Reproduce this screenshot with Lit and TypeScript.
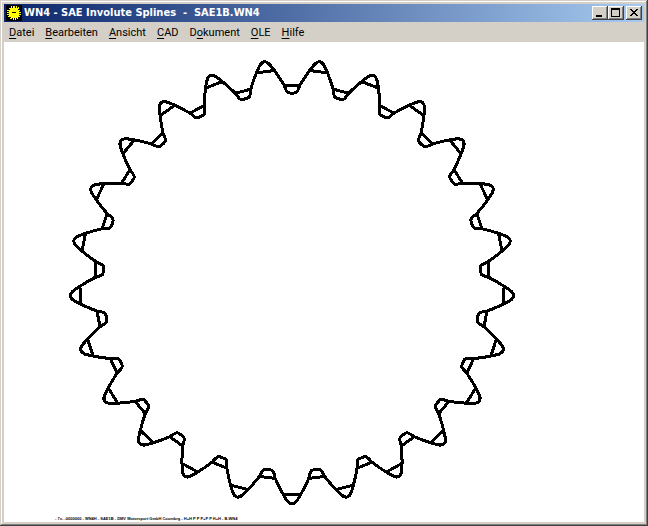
import { LitElement, html, css, svg } from "lit";
import { customElement } from "lit/decorators.js";

const TEETH = 25;
const CX = 288;
const CY = 240;
const STEP = (2 * Math.PI) / TEETH;

/** Profile point: offset across the tooth axis and distance along it. */
function place(angle: number, t: number, r: number): string {
  const x = CX + r * Math.cos(angle) - t * Math.sin(angle);
  const y = CY + r * Math.sin(angle) + t * Math.cos(angle);
  return `${x.toFixed(1)} ${y.toFixed(1)}`;
}

const angles = Array.from({ length: TEETH }, (_, i) => Math.PI / 2 + i * STEP);

/** Tooth tips, flanks and rounded roots as one closed curve. */
function profilePath(): string {
  const d = [`M${place(angles[0], -9, 212)}`];
  for (const a of angles) {
    const p = (t: number, r: number) => place(a, t, r);
    const q = (t: number, r: number) => place(a + STEP / 2, t, r);
    const n = (t: number, r: number) => place(a + STEP, t, r);
    d.push(
      `C${p(-6, 217)} ${p(-4, 222)} ${p(0, 222)}`,
      `C${p(4, 222)} ${p(6, 217)} ${p(9, 212)}`,
      `Q${p(13, 205)} ${q(-8, 197)}`,
      `L${q(-6, 192)} Q${q(-5, 189)} ${q(-2, 189)} L${q(2, 189)}`,
      `Q${q(5, 189)} ${q(6, 192)} L${q(8, 197)}`,
      `Q${n(-13, 205)} ${n(-9, 212)}`
    );
  }
  return d.join(" ") + "Z";
}

/** Short lines where the flanks meet the tip and root rounding. */
function chordPath(): string {
  return angles
    .map((a) => {
      const g = a + STEP / 2;
      return `M${place(a, -9, 212)}L${place(a, 9, 212)}M${place(g, -8, 197)}L${place(g, 8, 197)}`;
    })
    .join("");
}

const MENU: [string, string, string][] = [
  ["", "D", "atei"],
  ["", "B", "earbeiten"],
  ["", "A", "nsicht"],
  ["", "C", "AD"],
  ["D", "o", "kument"],
  ["", "O", "LE"],
  ["", "H", "ilfe"],
];

@customElement("app-root")
export class AppRoot extends LitElement {
  static styles = css`
    :host {
      display: flex;
      flex-direction: column;
      box-sizing: border-box;
      height: 100vh;
      padding: 4px;
      background: #d4d0c8;
      box-shadow: inset -1px -1px #404040, inset 1px 1px #d4d0c8,
        inset -2px -2px #808080, inset 2px 2px #fff;
      color: #000;
    }
    .title {
      display: flex;
      align-items: center;
      height: 18px;
      flex: none;
      padding: 0 2px;
      gap: 2px;
      background: linear-gradient(90deg, #0a246a, #a6caf0);
      color: #fff;
    }
    .logo {
      width: 16px;
      height: 16px;
      flex: none;
    }
    h1 {
      flex: 1;
      margin: 0;
      font: bold 11px/16px "DejaVu Sans Condensed", "DejaVu Sans", sans-serif;
      white-space: pre;
      overflow: hidden;
    }
    .controls {
      display: flex;
    }
    .control {
      width: 16px;
      height: 14px;
      padding: 0;
      border: 0;
      background: #d4d0c8;
      box-shadow: inset -1px -1px #404040, inset 1px 1px #fff,
        inset -2px -2px #808080;
    }
    .control svg {
      display: block;
      width: 16px;
      height: 14px;
    }
    .close {
      margin-left: 2px;
    }
    .menu {
      display: flex;
      flex: none;
      height: 20px;
    }
    .item {
      padding: 2px 6px 0 5px;
      border: 0;
      background: none;
      font: 11px/14px Roboto, sans-serif;
      color: inherit;
      white-space: nowrap;
    }
    .key {
      text-decoration: underline;
      text-underline-offset: 2px;
    }
    .canvas {
      flex: 1;
      min-height: 0;
      background: #fff;
    }
    .drawing {
      display: block;
      width: 100%;
      height: 100%;
    }
    .outline,
    .chords {
      fill: none;
      stroke: #000;
      stroke-width: 3;
      stroke-linejoin: round;
      stroke-linecap: round;
      shape-rendering: crispEdges;
    }
    .note {
      font: bold 4px "Liberation Sans", sans-serif;
    }
  `;

  render() {
    return html`
      <header class="title">
        <svg class="logo" viewBox="0 0 16 16" shape-rendering="crispEdges" aria-hidden="true">
          <rect width="16" height="16" fill="#000" />
          <path
            fill="#ff0"
            d="M5 1h1v2h1V1h2v2h1V1h1v2h1V2h1v2h-1v1h2v1h-1v1h2v1h-2v1h2v1h-2v1h1v1h-2v2h-1v-1h-1v2H9v-2H8v2H7v-2H6v1H4v-1h1v-1H2v-1h1v-1H1V9h2V8H1V7h2V6H1V5h3V4H3V3h2z"
          />
          <path fill="#000" d="M6 7h4v1H6z" />
        </svg>
        <h1>WN4 - SAE Involute Splines  -  SAE1B.WN4</h1>
        <div class="controls">
          <button class="control" aria-label="Minimize">
            <svg viewBox="0 0 16 14"><path d="M4 9h6v2H4z" /></svg>
          </button>
          <button class="control" aria-label="Maximize">
            <svg viewBox="0 0 16 14"><path fill-rule="evenodd" d="M3 2h9v9H3zM4 4v6h7V4z" /></svg>
          </button>
          <button class="control close" aria-label="Close">
            <svg viewBox="0 0 16 14" shape-rendering="crispEdges">
              <path d="M4 3h2v1h1v1h2V4h1V3h2v1h-1v1h-1v1H9v1h1v1h1v1h1v1h-2V9H9V8H7v1H6v1H4V9h1V8h1V7h1V6H6V5H5V4H4z" />
            </svg>
          </button>
        </div>
      </header>
      <nav class="menu">
        ${MENU.map(
          ([pre, key, post]) =>
            html`<button class="item">${pre}<span class="key">${key}</span>${post}</button>`
        )}
      </nav>
      <main class="canvas">
        <svg class="drawing" viewBox="0 0 640 480" role="img" aria-label="SAE involute spline profile">
          ${svg`<path class="outline" d=${profilePath()} /><path class="chords" d=${chordPath()} />`}
          <text class="note" x="51" y="478">- 7=- -0000000 - WN4H - SAE1B - DMV Motorsport GmbH Coumbrg - H+H P P P+P P H+H - B.WN4</text>
        </svg>
      </main>
    `;
  }
}
